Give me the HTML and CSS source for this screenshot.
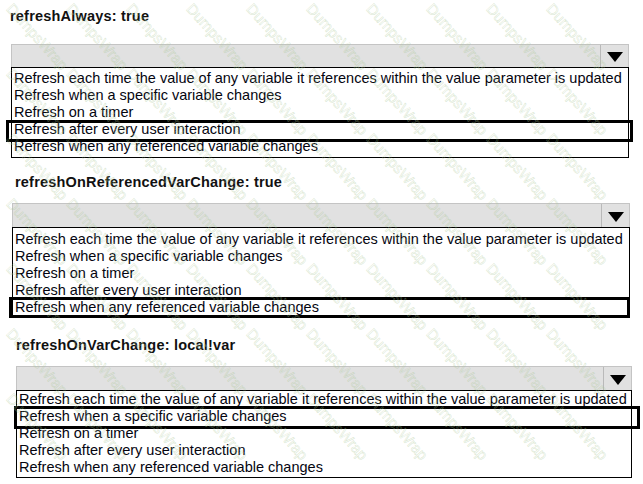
FILE: index.html
```html
<!DOCTYPE html>
<html>
<head>
<meta charset="utf-8">
<link rel="stylesheet" href="styles.css">
</head>
<body>
<section class="group g1">
  <h2 class="title">refreshAlways: true</h2>
  <div class="select">
    <div class="bar"><span class="btn"><svg width="16" height="10" viewBox="0 0 16 10"><polygon points="0,0 16,0 8,10" fill="#000"/></svg></span></div>
    <ul class="list">
      <li>Refresh each time the value of any variable it references within the value parameter is updated</li>
      <li>Refresh when a specific variable changes</li>
      <li>Refresh on a timer</li>
      <li class="pick">Refresh after every user interaction</li>
      <li>Refresh when any referenced variable changes</li>
    </ul>
  </div>
</section>
<section class="group g2">
  <h2 class="title">refreshOnReferencedVarChange: true</h2>
  <div class="select">
    <div class="bar"><span class="btn"><svg width="16" height="10" viewBox="0 0 16 10"><polygon points="0,0 16,0 8,10" fill="#000"/></svg></span></div>
    <ul class="list">
      <li>Refresh each time the value of any variable it references within the value parameter is updated</li>
      <li>Refresh when a specific variable changes</li>
      <li>Refresh on a timer</li>
      <li>Refresh after every user interaction</li>
      <li class="pick">Refresh when any referenced variable changes</li>
    </ul>
  </div>
</section>
<section class="group g3">
  <h2 class="title">refreshOnVarChange: local!var</h2>
  <div class="select">
    <div class="bar"><span class="btn"><svg width="16" height="10" viewBox="0 0 16 10"><polygon points="0,0 16,0 8,10" fill="#000"/></svg></span></div>
    <ul class="list">
      <li>Refresh each time the value of any variable it references within the value parameter is updated</li>
      <li class="pick">Refresh when a specific variable changes</li>
      <li>Refresh on a timer</li>
      <li>Refresh after every user interaction</li>
      <li>Refresh when any referenced variable changes</li>
    </ul>
  </div>
</section>
<div class="wm" aria-hidden="true">
  <span>DumpsWrap</span><span>DumpsWrap</span><span>DumpsWrap</span><span>DumpsWrap</span><span>DumpsWrap</span><span>DumpsWrap</span><span>DumpsWrap</span><span>DumpsWrap</span><span>DumpsWrap</span><span>DumpsWrap</span>
  <span>DumpsWrap</span><span>DumpsWrap</span><span>DumpsWrap</span><span>DumpsWrap</span><span>DumpsWrap</span><span>DumpsWrap</span><span>DumpsWrap</span><span>DumpsWrap</span><span>DumpsWrap</span><span>DumpsWrap</span>
  <span>DumpsWrap</span><span>DumpsWrap</span><span>DumpsWrap</span><span>DumpsWrap</span><span>DumpsWrap</span><span>DumpsWrap</span><span>DumpsWrap</span><span>DumpsWrap</span><span>DumpsWrap</span><span>DumpsWrap</span>
  <span>DumpsWrap</span><span>DumpsWrap</span><span>DumpsWrap</span><span>DumpsWrap</span><span>DumpsWrap</span><span>DumpsWrap</span><span>DumpsWrap</span><span>DumpsWrap</span><span>DumpsWrap</span><span>DumpsWrap</span>
  <span>DumpsWrap</span><span>DumpsWrap</span><span>DumpsWrap</span><span>DumpsWrap</span><span>DumpsWrap</span><span>DumpsWrap</span><span>DumpsWrap</span><span>DumpsWrap</span><span>DumpsWrap</span><span>DumpsWrap</span>
  <span>DumpsWrap</span><span>DumpsWrap</span><span>DumpsWrap</span><span>DumpsWrap</span><span>DumpsWrap</span><span>DumpsWrap</span><span>DumpsWrap</span><span>DumpsWrap</span><span>DumpsWrap</span><span>DumpsWrap</span>
  <span>DumpsWrap</span><span>DumpsWrap</span><span>DumpsWrap</span><span>DumpsWrap</span><span>DumpsWrap</span><span>DumpsWrap</span><span>DumpsWrap</span><span>DumpsWrap</span><span>DumpsWrap</span><span>DumpsWrap</span>
</div>
</body>
</html>
```
FILE: styles.css
```css
html, body {
  margin: 0;
  padding: 0;
  background: #ffffff;
}
body {
  position: relative;
  width: 643px;
  height: 484px;
  overflow: hidden;
  font-family: "Liberation Sans", Arial, sans-serif;
  color: #000;
}
.group {
  display: flex;
  flex-direction: column;
}
.title {
  margin: 0;
  font-size: 14.5px;
  letter-spacing: 0.2px;
  line-height: 17px;
  font-weight: bold;
  color: #111;
}
.select {
  display: flex;
  flex-direction: column;
}
.bar {
  height: 22px;
  background: #e1e1e1;
  border: 1px solid #c4c4c4;
  border-bottom: none;
  display: flex;
  justify-content: flex-end;
}
.btn {
  width: 28px;
  border-left: 1px solid #b9b9b9;
  display: flex;
  align-items: center;
  justify-content: center;
  padding-top: 2px;
  box-sizing: border-box;
}
.btn svg {
  display: block;
}
.list {
  list-style: none;
  margin: 0;
  border: 1px solid #000;
  background: #fff;
}
.list li {
  position: relative;
  font-size: 14.5px;
  line-height: 17px;
  padding-left: 2px;
  white-space: nowrap;
  color: #050510;
}
.pick::after {
  content: "";
  position: absolute;
  border: 3px solid #000;
}

/* group 1 */
.g1 { padding-top: 8px; }
.g1 .title { margin-left: 10px; }
.g1 .select { margin: 19px 0 0 11px; width: 618px; }
.g1 .list { padding: 2px 0 2px; }
.g1 .pick::after { left: -6px; right: -5px; top: -1px; bottom: -4px; }

/* group 2 */
.g2 { padding-top: 16px; }
.g2 .title { margin-left: 15px; }
.g2 .select { margin: 12px 0 0 12px; width: 618px; }
.g2 .bar { height: 23px; }
.g2 .list { padding: 3px 0 0; }
.g2 .pick::after { left: -4px; right: -1px; top: -2px; bottom: -2px; }

/* group 3 */
.g3 { padding-top: 20px; }
.g3 .title { margin-left: 16px; }
.g3 .select { margin: 12px 0 0 16px; width: 616px; }
.g3 .bar { height: 23px; }
.g3 .list { padding: 0 0 1px; }
.g3 .pick::after { left: -3px; right: -9px; top: -2px; bottom: -4px; }

/* watermark overlay, kept inside the frame */
.wm {
  position: absolute;
  left: 16px;
  top: 0;
  display: grid;
  grid-template-columns: repeat(10, 60px);
  grid-auto-rows: 65px;
  pointer-events: none;
}
.wm span {
  display: block;
  width: 0;
  height: 0;
  font-family: "Liberation Sans", Arial, sans-serif;
  font-size: 15px;
  line-height: 17px;
  color: transparent;
  -webkit-text-stroke: 0.5px rgba(170, 200, 150, 0.45);
  transform: rotate(48deg);
  transform-origin: 0 0;
  white-space: nowrap;
}
```
